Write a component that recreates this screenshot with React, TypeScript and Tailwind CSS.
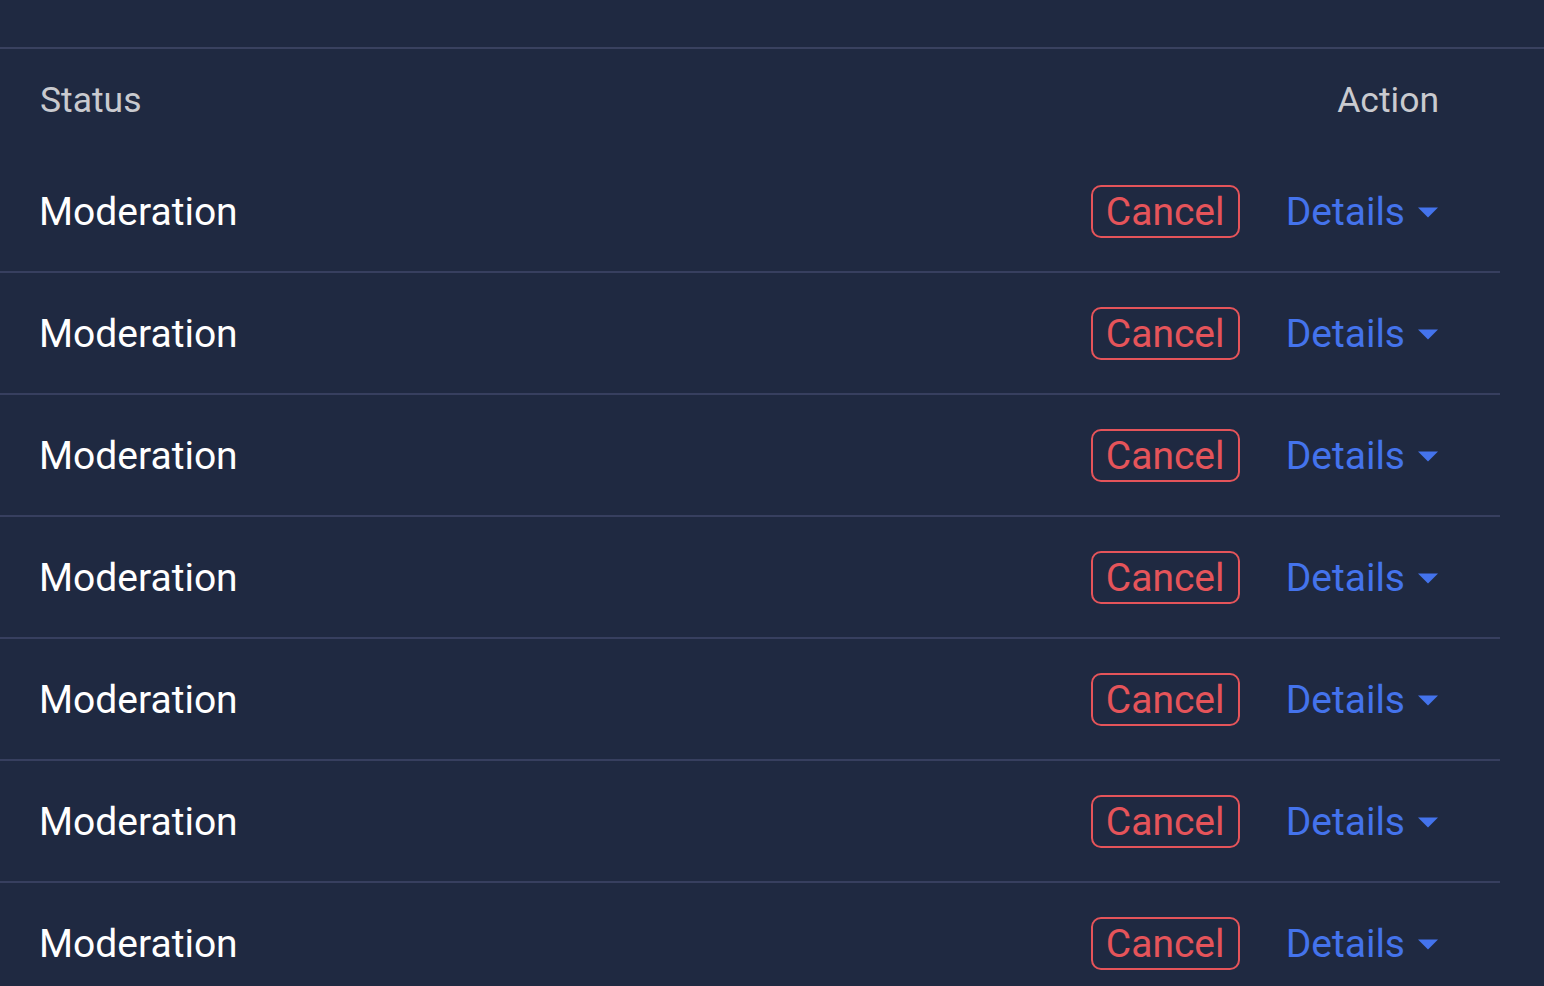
const ROWS = Array.from({ length: 7 }, (_, i) => ({ id: i, status: "Moderation" }));

function Caret() {
  return (
    <svg width="20" height="11" viewBox="0 0 20 11" className="ml-[13px] shrink-0">
      <path d="M0 0.5 H20 L10 10.5 Z" fill="#4473ec" />
    </svg>
  );
}

export default function App() {
  return (
    <div
      className="min-h-screen overflow-hidden bg-[#1f2941] pt-[47px] text-white"
      style={{ fontFamily: "Roboto, 'Noto Sans', sans-serif" }}
    >
      <div className="border-t-2 border-[#39415f]">
        <div className="w-[1500px]">
          <div className="flex h-[102px] items-center justify-between pl-10 pr-[61px] pt-[2px] text-[35.5px] text-[#c9cacf]">
            <span>Status</span>
            <span>Action</span>
          </div>
          {ROWS.map((row) => (
            <div
              key={row.id}
              className="flex h-[122px] items-center justify-between border-b-2 border-[#373f5f] pl-10 pr-[62px] pt-[2px]"
            >
              <span className="-ml-px text-[39px] leading-none">{row.status}</span>
              <div className="flex items-center">
                <button
                  type="button"
                  className="-mt-[2px] flex h-[53px] w-[149px] items-center justify-center rounded-[10px] border-2 border-[#e5545a] pt-[2px] text-[39px] leading-none text-[#e5545a]"
                >
                  Cancel
                </button>
                <button
                  type="button"
                  className="ml-[46px] flex items-center text-[39px] leading-none text-[#4473ec]"
                >
                  Details
                  <Caret />
                </button>
              </div>
            </div>
          ))}
        </div>
      </div>
    </div>
  );
}
